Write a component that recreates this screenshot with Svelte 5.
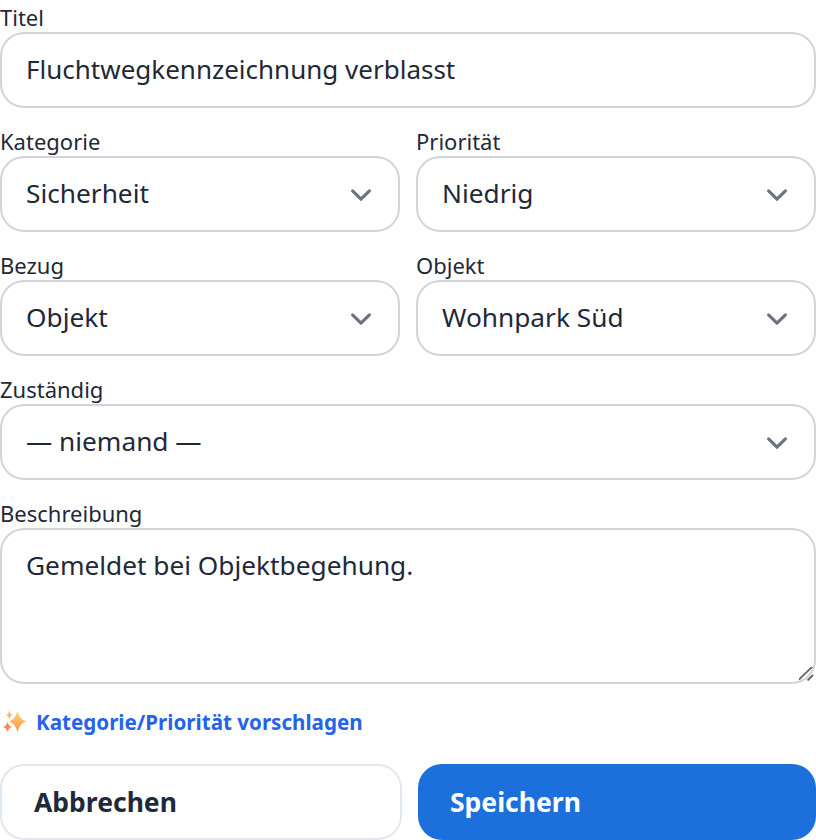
<script>
    let title = $state("Fluchtwegkennzeichnung verblasst");
    let description = $state("Gemeldet bei Objektbegehung.");
    let category = $state("Sicherheit");
    let priority = $state("Niedrig");
    let scope = $state("Objekt");
    let property = $state("Wohnpark Süd");
    let assignee = $state("");
</script>

<form class="form" onsubmit={(e) => e.preventDefault()}>
    <label class="field">
        <span>Titel</span>
        <input type="text" bind:value={title} />
    </label>

    <div class="row">
        <label class="field">
            <span>Kategorie</span>
            <select bind:value={category}>
                <option>Sicherheit</option>
                <option>Technik</option>
                <option>Reinigung</option>
            </select>
        </label>
        <label class="field">
            <span>Priorität</span>
            <select bind:value={priority}>
                <option>Niedrig</option>
                <option>Mittel</option>
                <option>Hoch</option>
            </select>
        </label>
    </div>

    <div class="row">
        <label class="field">
            <span>Bezug</span>
            <select bind:value={scope}>
                <option>Objekt</option>
                <option>Einheit</option>
            </select>
        </label>
        <label class="field">
            <span>Objekt</span>
            <select bind:value={property}>
                <option>Wohnpark Süd</option>
                <option>Wohnpark Nord</option>
            </select>
        </label>
    </div>

    <label class="field">
        <span>Zuständig</span>
        <select bind:value={assignee}>
            <option value="">— niemand —</option>
        </select>
    </label>

    <label class="field">
        <span>Beschreibung</span>
        <textarea bind:value={description}></textarea>
    </label>

    <button type="button" class="suggest">
        <svg class="sparkle" viewBox="0 0 24 24" width="24" height="24" aria-hidden="true">
            <defs>
                <linearGradient id="spark" x1="0" y1="0" x2="0" y2="1">
                    <stop offset="0" stop-color="#ffd27a" />
                    <stop offset="1" stop-color="#ff9540" />
                </linearGradient>
            </defs>
            <path fill="url(#spark)" d="M15.500 1Q17.500 9.500 24 11.500 17.500 13.500 15.500 22 13.500 13.500 7 11.500 13.500 9.500 15.500 1z" />
            <path fill="#fdb462" d="M7.300 1Q8 4.200 10.300 5 8 5.800 7.300 9 6.600 5.800 4.300 5 6.600 4.200 7.300 1z" />
            <path fill="#fa8a52" d="M5.500 12Q6.500 16 10 17 6.500 18 5.500 22 4.500 18 1 17 4.500 16 5.500 12z" />
        </svg>
        Kategorie/Priorität vorschlagen
    </button>

    <div class="actions">
        <button type="button" class="btn cancel">Abbrechen</button>
        <button type="submit" class="btn save">Speichern</button>
    </div>
</form>

<style>
    :global(body) {
        background: #fff;
    }

    .form {
        display: flex;
        flex-direction: column;
        gap: 16px;
        width: 816px;
        font-family: "Noto Sans", "Open Sans", sans-serif;
        color: #1f2937;
    }

    .row {
        display: grid;
        grid-template-columns: 1fr 1fr;
        gap: 16px;
    }

    .field {
        display: flex;
        flex-direction: column;
    }

    .field span {
        padding-top: 2px;
        font-size: 22px;
        line-height: 30px;
        color: #1f2937;
    }

    input,
    select,
    textarea {
        box-sizing: border-box;
        width: 100%;
        margin: 0;
        padding: 15px 24px 17px;
        border: 2px solid #d1d5db;
        border-radius: 24px;
        background-color: #fff;
        font: inherit;
        font-size: 26.250px;
        line-height: 40px;
        color: #1f2937;
        outline: none;
    }

    input {
        font-size: 26px;
    }

    input,
    select {
        height: 76px;
    }

    select {
        appearance: none;
        padding-right: 60px;
        background-image: url("data:image/svg+xml,%3Csvg xmlns='http://www.w3.org/2000/svg' fill='none' viewBox='0 0 20 20'%3E%3Cpath stroke='%236b7280' stroke-linecap='round' stroke-linejoin='round' stroke-width='1.500' d='M6 8l4 4 4-4'/%3E%3C/svg%3E");
        background-repeat: no-repeat;
        background-position: right 16px top 16px;
        background-size: 42px 42px;
    }

    textarea {
        display: block;
        height: 156px;
        resize: vertical;
    }

    textarea::-webkit-resizer {
        background: url("data:image/svg+xml,%3Csvg xmlns='http://www.w3.org/2000/svg' viewBox='0 0 15 15'%3E%3Cpath stroke='%23666' stroke-width='1.800' d='M0 12.500 14 -1M8.500 13.500 14 8'/%3E%3C/svg%3E") no-repeat;
    }

    .suggest {
        display: flex;
        align-items: center;
        gap: 10px;
        height: 32px;
        margin: 6px 0 10px;
        padding: 0;
        border: 0;
        background: none;
        font: inherit;
        font-size: 20.600px;
        font-weight: 700;
        color: #2563eb;
        cursor: pointer;
    }

    .sparkle {
        flex: none;
        margin-left: 2px;
    }

    .actions {
        display: flex;
        gap: 16px;
    }

    .btn {
        flex: 1 1 0;
        height: 76px;
        padding: 0 32px;
        border: 0;
        border-radius: 24px;
        font: inherit;
        font-size: 26.500px;
        font-weight: 700;
        text-align: left;
        cursor: pointer;
    }

    .cancel {
        border: 2px solid #e2e8f0;
        background: #fff;
        color: #1e293b;
    }

    .save {
        background: #1d6fdc;
        color: #fff;
    }
</style>
